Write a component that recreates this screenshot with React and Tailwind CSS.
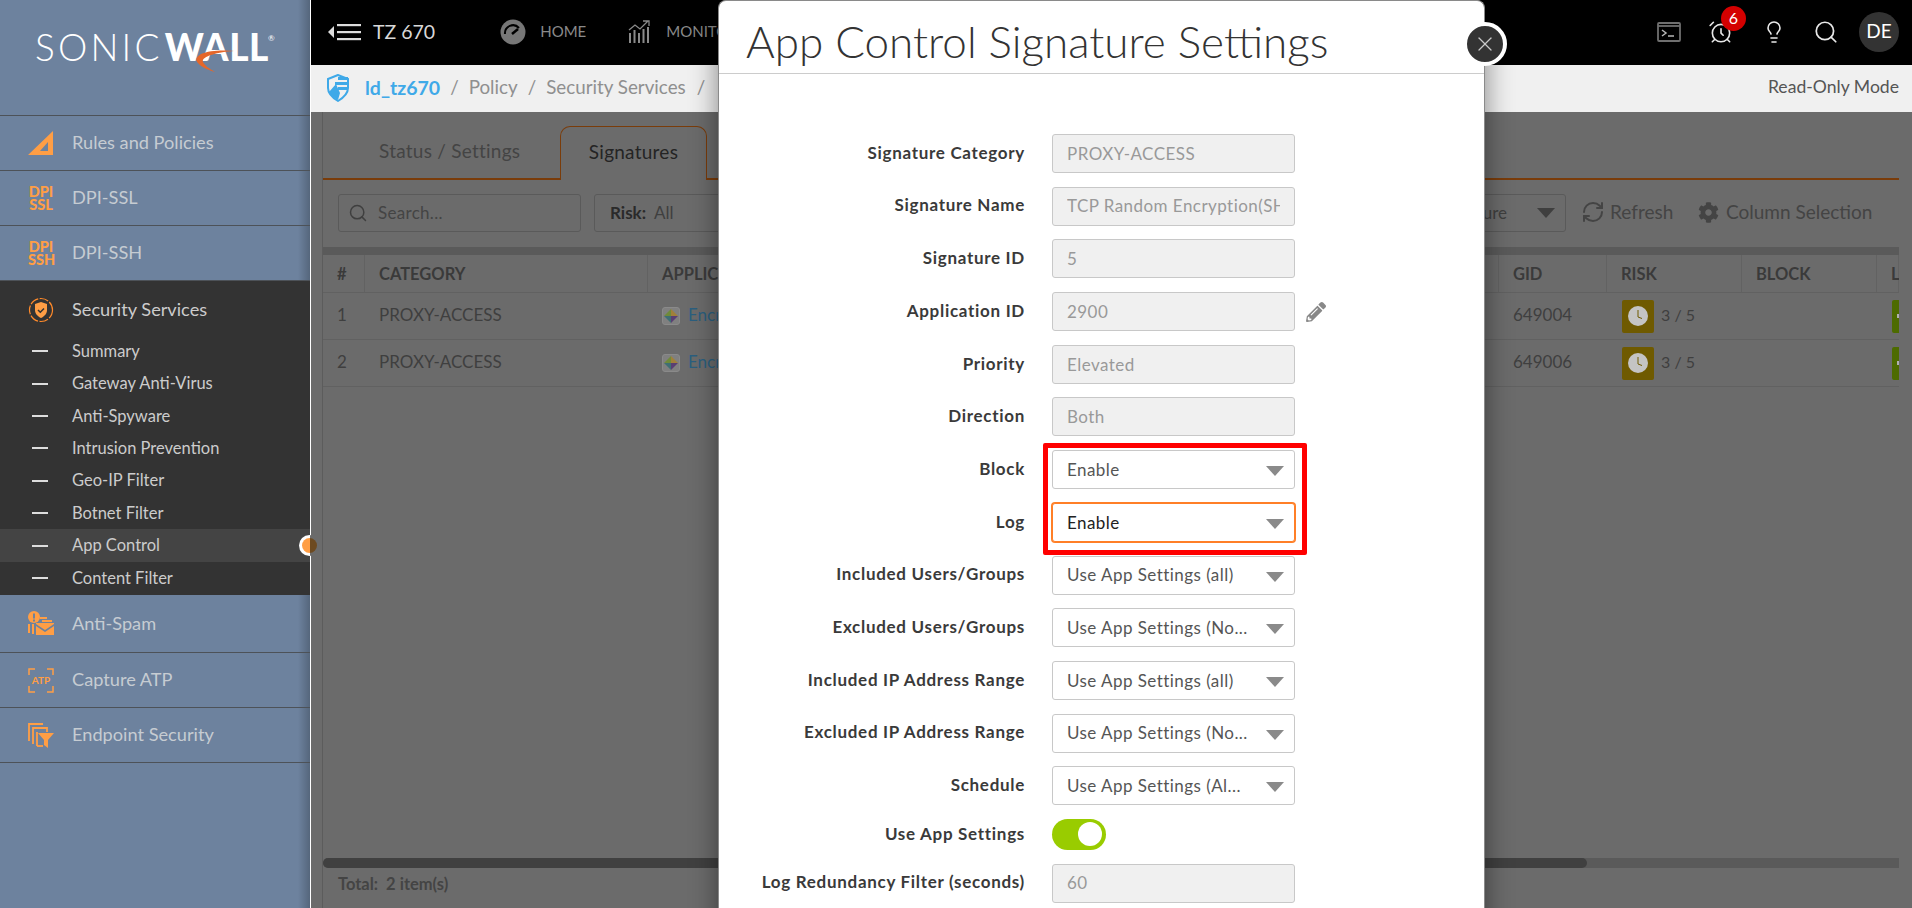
import React from 'react'
import { AlarmClock, Lightbulb, RefreshCw, Search, X } from 'lucide-react'
import { FaCog, FaPencilAlt } from 'react-icons/fa'

const NAV_TOP = [
  { label: 'Rules and Policies', icon: <RulerIcon /> },
  { label: 'DPI-SSL', icon: <DpiIcon bottom="SSL" /> },
  { label: 'DPI-SSH', icon: <DpiIcon bottom="SSH" /> },
]

const SUB_ITEMS = ['Summary', 'Gateway Anti-Virus', 'Anti-Spyware', 'Intrusion Prevention', 'Geo-IP Filter', 'Botnet Filter', 'App Control', 'Content Filter']

const NAV_BOTTOM = [
  { label: 'Anti-Spam', icon: <SpamIcon />, cls: 'h-[58px]' },
  { label: 'Capture ATP', icon: <AtpIcon />, cls: 'h-[55px]' },
  { label: 'Endpoint Security', icon: <EndpointIcon />, cls: 'h-[55px]' },
]

const ROWS = [
  { n: 1, gid: '649004' },
  { n: 2, gid: '649006' },
]

const FIELDS = [
  { label: 'Signature Category', value: 'PROXY-ACCESS' },
  { label: 'Signature Name', value: 'TCP Random Encryption(SHA256)' },
  { label: 'Signature ID', value: '5' },
  { label: 'Application ID', value: '2900', edit: true },
  { label: 'Priority', value: 'Elevated' },
  { label: 'Direction', value: 'Both' },
  { label: 'Block', value: 'Enable', select: true },
  { label: 'Log', value: 'Enable', select: true, focus: true },
  { label: 'Included Users/Groups', value: 'Use App Settings (all)', select: true },
  { label: 'Excluded Users/Groups', value: 'Use App Settings (No...', select: true },
  { label: 'Included IP Address Range', value: 'Use App Settings (all)', select: true },
  { label: 'Excluded IP Address Range', value: 'Use App Settings (No...', select: true },
  { label: 'Schedule', value: 'Use App Settings (Al...', select: true },
]

function RulerIcon() {
  return (
    <svg width="26" height="25" viewBox="0 0 26 25">
      <path fillRule="evenodd" fill="#ff9e45" d="M25 0v24H0zM20 11l-8 9h8z" />
    </svg>
  )
}

function DpiIcon({ bottom }) {
  return (
    <div className="w-[26px] text-center text-[14.5px] leading-[13px] font-black text-[#ff9e45]">
      DPI<br />{bottom}
    </div>
  )
}

function ShieldCircleIcon() {
  return (
    <svg width="26" height="26" viewBox="0 0 26 26">
      <circle cx="13" cy="13" r="11.5" fill="none" stroke="#ff8a2a" strokeWidth="1.2" strokeDasharray="9 1.5" />
      <path fill="#ff9e45" d="M13 5l6 2v6c0 4-3 6.5-6 8-3-1.500-6-4-6-8V7z" />
      <path fill="none" stroke="#333" strokeWidth="1.500" d="M10 13l2.300 2.300 3.700-3.800" />
    </svg>
  )
}

function SpamIcon() {
  return (
    <svg width="26" height="25" viewBox="0 0 26 25" fill="#ff9e45">
      <circle cx="6" cy="6" r="6" />
      <rect x="5" y="2.500" width="2" height="5" fill="#6d829e" />
      <rect x="5" y="8.500" width="2" height="2" fill="#6d829e" />
      <rect x="0" y="13" width="2" height="9" />
      <rect x="4" y="13" width="2" height="10" />
      <rect x="12" y="6" width="7" height="2" />
      <rect x="14" y="9" width="10" height="2" />
      <path d="M8 12h18v1L17 19 8 13zM8 15l9 6 9-6v9H8z" />
    </svg>
  )
}

function AtpIcon() {
  return (
    <div className="relative flex h-[25px] w-[26px] items-center justify-center">
      <svg className="absolute inset-0" width="26" height="25" viewBox="0 0 26 25" fill="none" stroke="#ff9e45" strokeWidth="1.500">
        <path d="M1 7V1h6M19 1h6v6M1 18v6h6M19 24h6v-6" />
      </svg>
      <span className="text-[10px] font-bold text-[#ff9e45]">ATP</span>
    </div>
  )
}

function EndpointIcon() {
  return (
    <svg width="26" height="25" viewBox="0 0 26 25" fill="none" stroke="#ff9e45" strokeWidth="1.800">
      <path d="M1 18V1h14" />
      <path d="M5 21V5h14v4" />
      <path d="M9 23H15" />
      <path d="M9 9V23" />
      <path fill="#ff9e45" stroke="none" d="M10 10h16l-6 7v8l-4-3v-5z" />
    </svg>
  )
}

function SonicLogo() {
  return (
    <div className="relative flex h-[116px] items-start border-b border-[#4d5258] pt-[24px] pl-[35px] text-white">
      <span className="text-[37px] leading-[46px] font-light tracking-[3.2px]">SONIC</span>
      <span className="ml-[2px] text-[37px] leading-[46px] font-black tracking-[0.6px]">WALL</span>
      <span className="mt-[9px] ml-[-1px] text-[8px] leading-[10px]">®</span>
      <svg className="absolute top-[48px] left-[195px]" width="42" height="26" viewBox="0 0 42 26">
        <path fill="#e5672a" d="M39 3C30 2 14 2 6 6 1 9 0 12 3 15c3 4 10 7 17 9-5-3-10-6-12-10C6 8 24 4 39 3z" />
      </svg>
    </div>
  )
}

function NavRow({ label, icon, cls = 'h-[55px]' }) {
  return (
    <div className={`flex items-center border-b border-[#4d5258] pl-[28px] ${cls}`}>
      <div className="flex w-[26px] justify-center">{icon}</div>
      <span className="ml-[18px] text-[18.2px] text-[#c6ccd2]">{label}</span>
    </div>
  )
}

function SubItem({ label }) {
  const active = label === 'App Control'
  return (
    <div className={`relative flex h-[32.4px] items-center pl-[32px] ${active ? 'bg-[#444444]' : ''}`}>
      <span className="h-[2px] w-[16px] bg-[#dddddd]" />
      <span className="ml-[24px] text-[16.5px] text-[#cccccc]">{label}</span>
      {active && (
        <span className="absolute top-[6px] left-[299px] flex h-[21px] w-[21px] items-center justify-center rounded-full bg-[linear-gradient(90deg,#ffffff_52%,#6b6b6b_52%)]">
          <span className="h-[15px] w-[15px] rounded-full bg-[linear-gradient(90deg,#ff9e45_50%,#6d4a20_50%)]" />
        </span>
      )}
    </div>
  )
}

function Sidebar() {
  return (
    <aside className="relative z-10 w-[310px] shrink-0 bg-[linear-gradient(90deg,#6d829e_0,#6d829e_298px,#55667c_310px)]">
      <SonicLogo />
      {NAV_TOP.map((item) => <NavRow key={item.label} {...item} />)}
      <div className="h-[314px] bg-[#333333]">
        <div className="flex h-[54px] items-center pt-[3px] pl-[28px]">
          <ShieldCircleIcon />
          <span className="ml-[18px] text-[18.2px] text-[#cccccc]">Security Services</span>
        </div>
        {SUB_ITEMS.map((label) => <SubItem key={label} label={label} />)}
      </div>
      {NAV_BOTTOM.map((item) => <NavRow key={item.label} {...item} />)}
    </aside>
  )
}

function TopBar() {
  return (
    <header className="flex h-[65px] shrink-0 items-center bg-black pr-[13px] pb-[2px] pl-[17px]">
      <svg width="33" height="18" viewBox="0 0 33 18" fill="#dddddd">
        <path d="M0 9l6-6v12z" />
        <rect x="9" y="1" width="24" height="2.200" />
        <rect x="9" y="8" width="24" height="2.200" />
        <rect x="9" y="15" width="24" height="2.200" />
      </svg>
      <span className="ml-[12px] text-[19.5px] text-[#d8d8d8]">TZ 670</span>
      <svg className="ml-[65px]" width="26" height="26" viewBox="0 0 26 26">
        <circle cx="13" cy="13" r="12.500" fill="#777777" />
        <path fill="none" stroke="#000" strokeWidth="2" d="M5 15a8 8 0 0 1 14-6" />
        <path stroke="#000" strokeWidth="2.500" d="M12 15l6-5" />
      </svg>
      <span className="ml-[14px] text-[15px] text-[#8a8a8a]">HOME</span>
      <svg className="ml-[42px]" width="22" height="24" viewBox="0 0 22 24" fill="#8a8a8a">
        <rect x="1" y="13" width="2" height="10" />
        <rect x="5.500" y="10" width="2" height="13" />
        <rect x="10" y="13" width="2" height="10" />
        <rect x="14.500" y="9" width="2" height="14" />
        <rect x="19" y="7" width="2" height="16" />
        <path fill="none" stroke="#8a8a8a" strokeWidth="1.300" d="M1 10l6-5 5 4 8-8M15 1h6v5" />
      </svg>
      <span className="ml-[16px] text-[15px] text-[#8a8a8a]">MONITOR</span>
      <div className="ml-auto flex items-center">
        <svg width="24" height="20" viewBox="0 0 24 20" fill="none" stroke="#6f6f6f" strokeWidth="1.800">
          <rect x="1" y="1" width="22" height="18" rx="1" />
          <path d="M1 4h22" />
          <path stroke="#b5b5b5" strokeWidth="1.500" d="M5 8l4 3-4 3M11 14h6" />
        </svg>
        <div className="relative ml-[27px] flex">
          <AlarmClock size={26} strokeWidth={1.5} className="text-[#e8e8e8]" />
          <span className="absolute top-[-13px] left-[13px] flex h-[25px] w-[25px] items-center justify-center rounded-full bg-[#d40000] text-[16px] text-white">6</span>
        </div>
        <Lightbulb size={24} strokeWidth={1.6} className="ml-[28px] text-[#e8e8e8]" />
        <Search size={26} strokeWidth={1.6} className="ml-[27px] text-[#e8e8e8]" />
        <span className="ml-[20px] flex h-[40px] w-[40px] items-center justify-center rounded-full bg-[#333333] text-[19px] text-white">DE</span>
      </div>
    </header>
  )
}

function BreadcrumbBar() {
  return (
    <div className="flex h-[47px] shrink-0 items-center bg-[#f0f0f0] pr-[13px] pb-[2px] pl-[15px]">
      <svg width="24" height="28" viewBox="0 0 24 28">
        <path fill="none" stroke="#3fa9e8" strokeWidth="2" d="M12 1L2 5v9c0 6 5 10 10 13 5-3 10-7 10-13V5z" />
        <path fill="#3fa9e8" d="M12 3h10v3H12zM9 8h13v3H9zM12 13h10v3H12zM3 18l7-8 4 9-2 7c-4-2-7-4-9-8z" />
      </svg>
      <span className="ml-[15px] text-[19.5px] font-bold text-[#3fa9e8]">ld_tz670</span>
      <span className="mx-[10px] text-[18.8px] text-[#8f8f8f]">/</span>
      <span className="text-[18.8px] text-[#8f8f8f]">Policy</span>
      <span className="mx-[10px] text-[18.8px] text-[#8f8f8f]">/</span>
      <span className="text-[18.8px] text-[#8f8f8f]">Security Services</span>
      <span className="ml-[11px] text-[18.8px] text-[#8f8f8f]">/</span>
      <span className="ml-auto text-[17.6px] text-[#555555]">Read-Only Mode</span>
    </div>
  )
}

function ClockBadge() {
  return (
    <span className="flex h-[33px] w-[32px] items-center justify-center rounded-[2px] bg-[#6f5a00]">
      <svg width="20" height="20" viewBox="0 0 20 20">
        <circle cx="10" cy="10" r="10" fill="#c4c4c4" />
        <path fill="none" stroke="#6f5a00" strokeWidth="1" d="M10 4v7l4 1.500" />
      </svg>
    </span>
  )
}

function TableRow({ n, gid }) {
  return (
    <div className="grid h-[47px] grid-cols-[42px_283px_851px_108px_135px_135px_22px] items-center overflow-hidden border-b border-[#616161] text-[17px] text-[#3f3f3f]">
      <span className="pb-[2px] pl-[14px]">{n}</span>
      <span className="pb-[2px] pl-[14px]">PROXY-ACCESS</span>
      <span className="flex items-center pl-[14px]">
        <span className="flex h-[18px] w-[18px] items-center justify-center rounded-[3px] border border-[#8a8a8a] bg-[#808080]">
          <svg width="14" height="14" viewBox="0 0 14 14">
            <path fill="#6f8a3a" d="M7 0L0 7h7z" />
            <path fill="#a0803a" d="M7 0l7 7H7z" />
            <path fill="#3f6f73" d="M7 14L0 7h7z" />
            <path fill="#5a3f73" d="M7 14l7-7H7z" />
          </svg>
        </span>
        <span className="ml-[8px] pb-[2px] text-[#2b5f7f]">Encrypted Key Exchange</span>
      </span>
      <span className="pb-[2px] pl-[14px]">{gid}</span>
      <span className="flex items-center pl-[15px]">
        <ClockBadge />
        <span className="ml-[7px] pb-[2px] text-[16px]">3 / 5</span>
      </span>
      <span />
      <span className="ml-[15px] flex h-[33px] items-center rounded-l-[2px] bg-[#4d6b00] pl-[5px]">
        <span className="h-[4px] w-[2px] bg-[#b0b0b0]" />
      </span>
    </div>
  )
}

function Workspace() {
  const cell = 'flex h-full items-center border-r border-[#626262] pt-[2px] pl-[14px]'
  return (
    <div className="flex min-h-0 flex-1 bg-[#6b6b6b] pr-[13px] pl-[11px]">
      <div className="flex min-w-0 flex-1 flex-col border-l border-[#5c5c5c] pt-[14px]">
        {/* Tabs */}
        <div className="flex h-[54px] shrink-0 text-[19px] tracking-[0.25px]">
          <div className="flex w-[237px] items-center border-b-2 border-[#7a3c0a] pb-[2px] pl-[56px] text-[#444444]">Status / Settings</div>
          <div className="flex w-[147px] items-center justify-center rounded-t-[10px] border-x border-t border-[#7a3c0a] pb-[2px] text-[#242424]">Signatures</div>
          <div className="flex-1 border-b-2 border-[#7a3c0a]" />
        </div>
        {/* Toolbar */}
        <div className="mt-[14px] flex h-[39px] shrink-0 items-stretch pr-[27px] pb-[1px] pl-[15px] text-[17px] text-[#3f3f3f]">
          <div className="flex w-[243px] items-center rounded-[3px] border border-[#5a5a5a] pb-[1px] pl-[9px]">
            <Search size={20} strokeWidth={1.8} className="text-[#3f3f3f]" />
            <span className="ml-[10px] tracking-[0.3px] text-[#444444]">Search...</span>
          </div>
          <div className="ml-[13px] flex w-[280px] items-center rounded-[3px] border border-[#5a5a5a] pl-[15px]">
            <span className="font-bold text-[#2a2a2a]">Risk:</span>
            <span className="ml-[8px]">All</span>
          </div>
          <div className="ml-auto flex w-[300px] items-center justify-end rounded-[3px] border border-[#5a5a5a] pr-[10px]">
            <span>Signature</span>
            <span className="ml-[30px] h-0 w-0 border-x-[9px] border-t-[10px] border-x-transparent border-t-[#3f3f3f]" />
          </div>
          <div className="ml-[15px] flex items-center pb-[2px] text-[19px] text-[#444444]">
            <RefreshCw size={24} strokeWidth={2} />
            <span className="ml-[5px] w-[64px] whitespace-nowrap">Refresh</span>
            <FaCog size={21} className="ml-[24px]" />
            <span className="ml-[7px] w-[146px] whitespace-nowrap">Column Selection</span>
          </div>
        </div>
        {/* Table */}
        <div className="mt-[14px] h-[8px] shrink-0 bg-[#5a5a5a]" />
        <div className="grid h-[38px] shrink-0 grid-cols-[42px_283px_851px_108px_135px_135px_22px] items-center overflow-hidden border-b border-[#616161] text-[16.5px] font-bold text-[#3a3a3a]">
          <span className={cell}>#</span>
          <span className={cell}>CATEGORY</span>
          <span className={cell}>APPLICATION</span>
          <span className={cell}>GID</span>
          <span className={cell}>RISK</span>
          <span className={cell}>BLOCK</span>
          <span className={cell}>L</span>
        </div>
        {ROWS.map((row) => <TableRow key={row.n} {...row} />)}
        {/* Bottom scroll + total */}
        <div className="mt-auto h-[10px] shrink-0 rounded-l-full bg-[#5a5a5a]">
          <div className="h-full w-[1264px] rounded-full bg-[#404040]" />
        </div>
        <div className="flex h-[40px] shrink-0 items-start pt-[4px] pl-[15px] text-[16.5px] font-bold text-[#444444]">Total:&nbsp; 2 item(s)</div>
      </div>
    </div>
  )
}

function Field({ label, value, select, focus, edit }) {
  let box = 'border-[#c8c8c8] bg-[#f0f0f0] text-[#999999]'
  if (select) box = 'border-[#c8c8c8] bg-white text-[#555555]'
  if (focus) box = 'border-[#ff7f27] bg-white text-[#222222] shadow-[0_0_0_1px_#ff7f27]'
  return (
    <div className="flex h-[39px] items-center">
      <span className="w-[306px] pb-[2px] text-right text-[17px] font-bold tracking-[0.7px] text-[#3a3a3a]">{label}</span>
      <div className={`relative ml-[27px] flex h-full w-[243px] items-center rounded-[3px] border pl-[14px] text-[17px] tracking-[0.45px] ${box}`}>
        <span className={`overflow-hidden whitespace-nowrap ${select ? 'w-[186px]' : 'w-[213px]'}`}>{value}</span>
        {select && <span className="absolute top-[15px] right-[10px] h-0 w-0 border-x-[9.5px] border-t-[10px] border-x-transparent border-t-[#8a8a8a]" />}
      </div>
      {edit && <FaPencilAlt size={20} className="ml-[11px] text-[#888888]" />}
    </div>
  )
}

function Modal() {
  return (
    <div className="absolute top-0 left-[407px] z-20 h-[960px] w-[767px] rounded-t-[8px] border-x border-t border-[#8a8a8a] bg-white shadow-[0_0_28px_rgba(0,0,0,0.45)]">
      <div className="flex h-[73px] items-center border-b border-[#cccccc] pt-[8px] pl-[27px]">
        <h1 className="text-[44px] font-light text-[#333333]">App Control Signature Settings</h1>
      </div>
      <button type="button" className="absolute top-[21px] right-[-23px] flex h-[44px] w-[44px] items-center justify-center rounded-full border-4 border-white bg-[#333333] text-[#c8c8c8]">
        <X size={24} strokeWidth={1.3} />
      </button>
      <div className="flex flex-col gap-[13.7px] pt-[60px]">
        {FIELDS.map((f) => <Field key={f.label} {...f} />)}
        <div className="flex h-[31px] items-center">
          <span className="w-[306px] pb-[2px] text-right text-[17px] font-bold tracking-[0.7px] text-[#3a3a3a]">Use App Settings</span>
          <span className="ml-[27px] flex h-[31px] w-[54px] items-center justify-end rounded-full bg-[#99cc00] pr-[4px]">
            <span className="h-[24px] w-[24px] rounded-full bg-white" />
          </span>
        </div>
        <Field label="Log Redundancy Filter (seconds)" value="60" />
      </div>
      {/* Annotation box round Block and Log */}
      <div className="absolute top-[442px] left-[324px] h-[112px] w-[264px] rounded-[2px] border-[5px] border-[#ff0000]" />
    </div>
  )
}

export default function App() {
  return (
    <div className="flex h-[908px] w-[1912px] overflow-hidden bg-white font-['Lato','Noto_Sans',sans-serif]">
      <Sidebar />
      <main className="relative ml-px flex min-w-0 flex-1 flex-col">
        <TopBar />
        <BreadcrumbBar />
        <Workspace />
        <Modal />
      </main>
    </div>
  )
}
